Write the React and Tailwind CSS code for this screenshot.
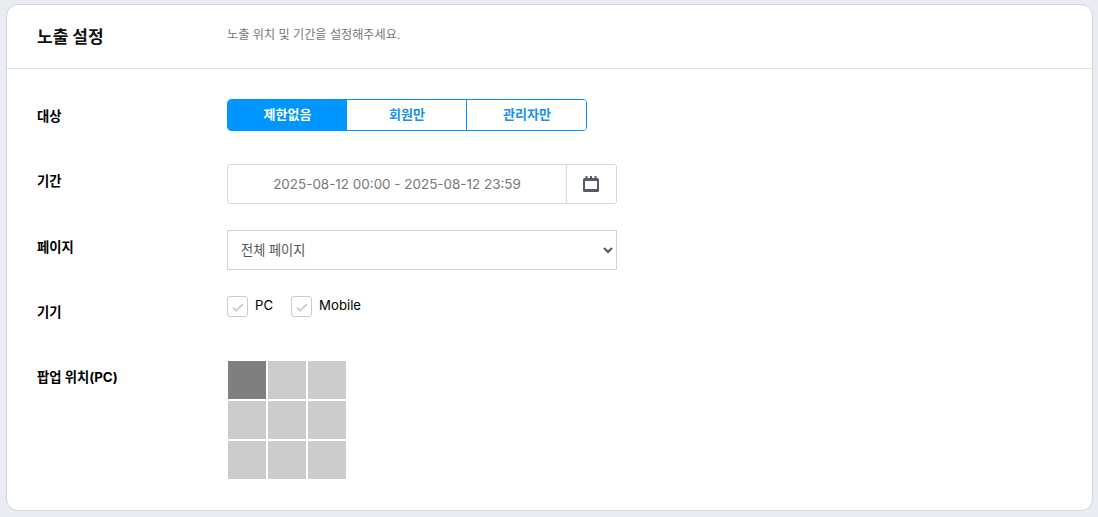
const font = "font-['Inter','Noto_Sans_CJK_KR',sans-serif]";

function Row({ label, children, className = '', labelClass = 'pt-[8px]' }) {
  return (
    <div className={`flex items-start ${className}`}>
      <div className={`w-[190px] shrink-0 text-[13.33px] leading-[18px] font-bold text-black ${labelClass}`}>{label}</div>
      <div className="min-w-0 flex-1">{children}</div>
    </div>
  );
}

function CheckItem({ label }) {
  return (
    <label className="flex items-start gap-[7px]">
      <span className="flex h-[21px] w-[21px] items-center justify-center rounded-[3px] border border-[#cccccc] bg-white">
        <svg width="12" height="9" viewBox="0 0 12 9" fill="none" className="mt-[2px]">
          <path d="M1 4.5 L4.2 7.5 L11 1" stroke="#c6c6c6" strokeWidth="1.7" />
        </svg>
      </span>
      <span className="text-[13.2px] leading-[18px] text-black">{label}</span>
    </label>
  );
}

export default function App() {
  const cells = [0, 1, 2, 3, 4, 5, 6, 7, 8];

  return (
    <div className={`h-[517px] w-full overflow-hidden bg-[#e9edf3] pt-[4px] pl-[6px] ${font}`}>
      <div className="h-[507px] w-[1087px] rounded-[12px] border border-[#cdd6e1] bg-white">
        <div className="flex h-[64px] items-center border-b border-[#dee2e6] pl-[30px]">
          <h2 className="mt-[2px] w-[190px] text-[17px] font-bold text-[#111111]">노출 설정</h2>
          <p className="mb-[2px] text-[12.13px] text-[#777777]">노출 위치 및 기간을 설정해주세요.</p>
        </div>

        <div className="pt-[30px] pl-[30px]">
          <Row label="대상">
            <div className="flex h-[32px] w-[360px] overflow-hidden rounded-[4px] border border-[#0096ff] text-[13px] font-semibold">
              <button className="w-[119px] bg-[#0096ff] text-white">제한없음</button>
              <button className="w-[119px] bg-white pl-px text-[#1a8fee]">회원만</button>
              <button className="w-[120px] border-l border-[#0096ff] bg-white pl-px text-[#1a8fee]">관리자만</button>
            </div>
          </Row>

          <Row label="기간" className="mt-[33px]">
            <div className="flex h-[40px] w-[390px] rounded-[3px] border border-[#d5d9e0] bg-white">
              <div className="flex flex-1 items-center justify-center pt-[1px] text-[13.45px] text-[#777777]">
                2025-08-12 00:00 - 2025-08-12 23:59
              </div>
              <div className="flex w-[50px] items-center justify-center border-l border-[#d5d9e0] pr-[2px]">
                <svg width="16" height="16" viewBox="0 0 16 16" fill="none">
                  <path
                    fillRule="evenodd"
                    d="M2.5 0 h2 v2 h2.5 v-2 h2 v2 h2.5 v-2 h2 v2 h1 a1.5 1.5 0 0 1 1.5 1.5 v11 a1.5 1.5 0 0 1 -1.5 1.5 h-13 a1.5 1.5 0 0 1 -1.5 -1.5 v-11 a1.5 1.5 0 0 1 1.5 -1.5 h1 z M2 5 v8 h12 v-8 z"
                    fill="#555c66"
                  />
                </svg>
              </div>
            </div>
          </Row>

          <Row label="페이지" className="mt-[26px]">
            <select className="h-[40px] w-[390px] border border-[#ced2da] bg-white pb-[1px] pl-[9px] text-[13.2px] text-[#555555]" defaultValue="all">
              <option value="all">전체 페이지</option>
            </select>
          </Row>

          <Row label="기기" className="mt-[26px]" labelClass="pt-[7px]">
            <div className="flex gap-[18px]">
              <CheckItem label="PC" />
              <CheckItem label="Mobile" />
            </div>
          </Row>

          <Row label="팝업 위치(PC)" className="mt-[40px]" labelClass="pt-[7px]">
            <div className="ml-px grid w-[118px] grid-cols-3 gap-[2px]">
              {cells.map((c) => (
                <div key={c} className={`h-[38px] ${c === 0 ? 'bg-[#7f7f7f]' : 'bg-[#cccccc]'}`} />
              ))}
            </div>
          </Row>
        </div>
      </div>
    </div>
  );
}
